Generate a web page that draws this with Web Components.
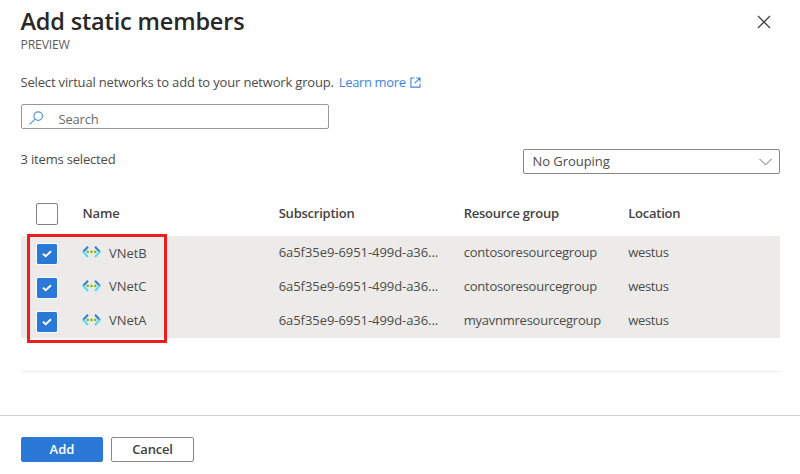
<!DOCTYPE html>
<html lang="en">
<head>
<meta charset="utf-8">
<title>Add static members</title>
<style>
html,body{margin:0;background:#fff}
body{font:13px/18px "Open Sans","Noto Sans",sans-serif;color:#4c4b4a;overflow:hidden}
</style>
</head>
<body>
<members-panel></members-panel>
<script>
const define=(name,html,init)=>customElements.define(name,class extends HTMLElement{
  constructor(){super();this.attachShadow({mode:'open'}).innerHTML=html;}
  connectedCallback(){if(init)init(this,this.shadowRoot);}
});

define('panel-header',`<style>
:host{display:flex;justify-content:space-between;height:47px;padding:5px 29px 0 20.5px}
h1{margin:0;font-size:23.5px;line-height:32px;font-weight:600;letter-spacing:-.17px;color:#292827}
p{margin:0;font-size:12.3px;line-height:16px;letter-spacing:-.23px;color:#605e5c}
svg{margin-top:10px;display:block}
</style><div><h1><slot></slot></h1><p><slot name="tag"></slot></p></div>
<svg width="14" height="14" viewBox="0 0 14 14" fill="none" stroke="#484644" stroke-width="1.3"><path d="M1 1l12 12M13 1L1 13"/></svg>`);

define('learn-link',`<style>
:host{display:inline-flex;align-items:center;color:#3c86dc}
span{letter-spacing:-.37px;margin-right:4.5px}
svg{margin-top:0}
</style><span><slot></slot></span>
<svg width="11" height="11" viewBox="0 0 11 11" fill="none" stroke="currentColor" stroke-width="1.1"><path d="M4.5 1H.9v9.1H10V6.5M6.3 1H10v3.7M9.8 1.2L4.6 6.4"/></svg>`);

define('search-box',`<style>
:host{display:flex;align-items:flex-start;box-sizing:border-box;width:308.5px;height:25px;border:1px solid #9b9998;border-radius:2px;padding:5px 0 0 6px;color:#6b6967;letter-spacing:-.2px}
svg{margin:1px 15px 0 1px}
</style><svg width="15" height="14" viewBox="0 0 15 14" fill="none" stroke="#4d8fe0" stroke-width="1.15"><circle cx="9.2" cy="5.1" r="4.3"/><path d="M6.1 8.2L.6 13.4"/></svg><span><slot></slot></span>`);

define('select-box',`<style>
:host{display:flex;align-items:flex-start;justify-content:space-between;box-sizing:border-box;width:257px;height:25px;border:1px solid #8a8886;border-radius:2px;padding:2px 7px 0 8.5px}
svg{margin-top:6px}
</style><span><slot></slot></span>
<svg width="13" height="8" viewBox="0 0 13 8" fill="none" stroke="#6b6967" stroke-width="1"><path d="M.6 1L6.5 7l5.9-6"/></svg>`);

define('check-box',`<style>
:host{display:flex;align-items:center;justify-content:center;box-sizing:border-box;width:22px;height:22px;border:1px solid #858381;border-radius:2px;background:#fff}
svg{display:none}
:host([checked]){border-color:#f8fafd;background:#2b79d6;background-clip:padding-box}
:host([checked]) svg{display:block}
</style><svg width="10" height="8" viewBox="0 0 10 8" fill="none" stroke="#fff" stroke-width="2"><path d="M1 3.7l2.7 2.5L9 1.2"/></svg>`);

define('vnet-icon',`<style>:host{display:block;width:19px;height:12px}svg{display:block}</style>
<svg width="19" height="12" viewBox="0 0 19 12" fill="none" stroke-width="2"><path d="M6 .8L1 6" stroke="#2f7fd8"/><path d="M1 5.6L6 11" stroke="#50dcf5"/><path d="M13 .8L18 6" stroke="#2f7fd8"/><path d="M18 5.6L13 11" stroke="#50dcf5"/><g fill="#83bc2b"><circle cx="5.7" cy="5.9" r="1.35"/><circle cx="9.5" cy="5.9" r="1.35"/><circle cx="13.3" cy="5.9" r="1.35"/></g></svg>`);

const columns='display:grid;grid-template-columns:61px 196.7px 185px 164.5px 1fr;';

define('grid-header',`<style>
:host{${columns}height:45px;font-weight:600;color:#444240;align-items:start}
check-box{margin:12px 0 0 14.5px}
span{padding-top:13px;letter-spacing:-.23px}
.n{letter-spacing:-.1px;padding-left:.4px}
</style><check-box></check-box><span class="n">Name</span><span>Subscription</span><span>Resource group</span><span>Location</span>`);

define('member-row',`<style>
:host{${columns}height:34px;background:#edebe9;align-items:start}
check-box{margin:7px 0 0 14.5px}
div{display:flex}
vnet-icon{margin:10px 8px 0 0}
span{padding-top:7px;letter-spacing:-.24px}
.n,.s{letter-spacing:-.06px}.l{letter-spacing:-.33px}
:host([name="VNetB"]) .n{padding-top:8px}
</style><check-box checked></check-box><div><vnet-icon></vnet-icon><span class="n"></span></div><span class="s">6a5f35e9-6951-499d-a36...</span><span class="g"></span><span class="l">westus</span>`,
(el,root)=>{root.querySelector('.n').textContent=el.getAttribute('name');root.querySelector('.g').textContent=el.getAttribute('group');});

define('highlight-frame',`<style>
:host{position:absolute;left:6px;top:-2px;box-sizing:border-box;width:140px;height:109px;border:3px solid #ec1c1f}
</style>`);

define('member-grid',`<style>
:host{display:block;margin:0 20px 0 21px;height:180px;border-bottom:1px solid #edebe9}
.rows{position:relative}
</style><grid-header></grid-header><div class="rows">
<member-row name="VNetB" group="contosoresourcegroup"></member-row>
<member-row name="VNetC" group="contosoresourcegroup"></member-row>
<member-row name="VNetA" group="myavnmresourcegroup"></member-row>
<highlight-frame></highlight-frame></div>`);

define('action-button',`<style>
:host{display:flex;align-items:flex-start;justify-content:center;box-sizing:border-box;width:83px;height:25px;padding-top:2px;border:1px solid #8a8886;border-radius:2px;font-weight:600;color:#403e3d;letter-spacing:-.2px}
:host([primary]){background:#2b79d6;border-color:#2b79d6;color:#fff;width:82px;letter-spacing:0}
</style><slot></slot>`);

define('members-panel',`<style>
:host{display:flex;flex-direction:column;height:474px;background:#fff}
.intro{display:flex;padding:21px 0 0 20.5px;height:31px;box-sizing:content-box}
.intro span{letter-spacing:-.17px;margin-right:5px}
learn-link{height:18px}
search-box{margin-left:20.5px}
.tools{display:flex;justify-content:space-between;height:42px;padding:20px 20px 0 20.5px;letter-spacing:-.18px}
.tools select-box{letter-spacing:-.05px}
.tools .count{padding-top:1px}
footer{display:flex;gap:8px;margin-top:43px;border-top:1px solid #d2d0ce;padding:21px 0 0 21px}
</style>
<panel-header>Add static members<span slot="tag">PREVIEW</span></panel-header>
<div class="intro"><span>Select virtual networks to add to your network group.</span><learn-link>Learn more</learn-link></div>
<search-box>Search</search-box>
<div class="tools"><span class="count">3 items selected</span><select-box>No Grouping</select-box></div>
<member-grid></member-grid>
<footer><action-button primary>Add</action-button><action-button>Cancel</action-button></footer>`);
</script>
</body>
</html>
